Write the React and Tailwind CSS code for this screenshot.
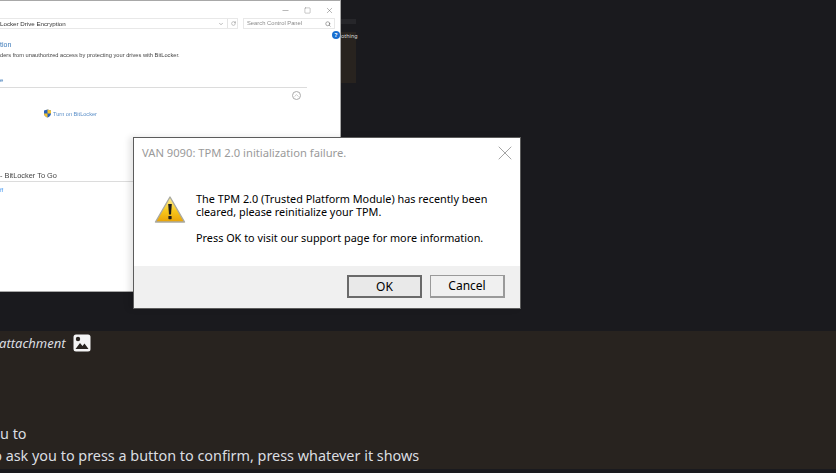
import { X, Minus, Square, ChevronDown, RotateCw, Search, ChevronUp } from "lucide-react";

const WarningIcon = () => (
    <svg width="32" height="29" viewBox="0 0 32 28">
        <defs>
            <linearGradient id="warn" x1="0" y1="0" x2="0" y2="1">
                <stop offset="0" stopColor="#fff3a0" />
                <stop offset="0.55" stopColor="#f8c81c" />
                <stop offset="1" stopColor="#e8a208" />
            </linearGradient>
        </defs>
        <path d="M16 1.5 L30.5 26.5 H1.5 Z" fill="url(#warn)" stroke="#a9a9a0" strokeWidth="1.4" strokeLinejoin="round" />
        <path d="M14.2 8.5 H17.8 L17 19 H15 Z" fill="#1c1c1c" />
        <rect x="14.4" y="20.5" width="3.2" height="3.2" rx="0.6" fill="#1c1c1c" />
    </svg>
);

const Shield = () => (
    <svg width="7" height="9" viewBox="0 0 8 9">
        <path d="M4 0 L8 1.2 V4.5 C8 7 6 8.4 4 9 C2 8.4 0 7 0 4.5 V1.2 Z" fill="#2a62b8" />
        <path d="M4 0 L8 1.2 V4.5 H4 Z" fill="#f2c230" />
        <path d="M4 4.5 V9 C2 8.4 0 7 0 4.5 Z" fill="#f2c230" />
    </svg>
);

const ImageIcon = () => (
    <svg width="18" height="18" viewBox="0 0 18 18">
        <rect x="0.5" y="0.5" width="17" height="17" rx="2.5" fill="#f4f4f4" />
        <circle cx="5" cy="5" r="2.2" fill="#28231f" />
        <path d="M2.5 15 L7 9 L9.5 12 L11.5 9.5 L15.5 15 Z" fill="#28231f" />
    </svg>
);

const ControlPanel = () => (
    <div className="absolute left-0 top-0 w-[341px] h-[292px] bg-white border-t border-r border-b border-[#a8a8a8] overflow-hidden text-[#3a3a3a] font-['Liberation_Sans',sans-serif]">
        <div className="blur-[0.3px]">
            <div className="h-4 flex items-center justify-end gap-[11px] pr-[6px] pt-[2px] text-[#444]">
                <Minus size={9} strokeWidth={1} />
                <Square size={7} strokeWidth={1} className="mx-[3px]" />
                <X size={9} strokeWidth={1} />
            </div>
            <div className="flex items-center h-[11px] mt-[1px] pr-[5px]">
                <div className="flex-1 flex items-center justify-between h-[11px] border-y border-r border-[#e8e8e8] text-[6.2px] pr-[1px]">
                    <span className="text-[#333]">Locker Drive Encryption</span>
                    <span className="flex items-center gap-[3px] text-[#777]">
                        <ChevronDown size={6} />
                        <span className="w-px h-[9px] bg-[#e4e4e4]"></span>
                        <RotateCw size={5} />
                    </span>
                </div>
                <div className="ml-[5px] w-[92px] h-[11px] border border-[#e8e8e8] flex items-center justify-between px-[3px] text-[5.8px] text-[#8a8a8a]">
                    <span>Search Control Panel</span>
                    <Search size={6} className="text-[#555]" />
                </div>
            </div>
            <p className="mt-[11px] text-[7px] leading-[10px] text-[#3a78b8]">tion</p>
            <p className="mt-[1px] text-[5.7px] leading-[8px] text-[#444] whitespace-nowrap">ders from unauthorized access by protecting your drives with BitLocker.</p>
            <p className="mt-[17px] text-[6px] leading-[8px] text-[#3a78b8]">e</p>
            <div className="mt-[3px] mr-[33px] border-t border-[#dcdcdc] flex justify-end pt-[3px] pr-[6px]">
                <span className="w-[9px] h-[9px] rounded-full border border-[#aaa] flex items-center justify-center text-[#888]">
                    <ChevronUp size={7} strokeWidth={1.5} />
                </span>
            </div>
            <div className="mt-[9px] ml-[44px] flex items-center gap-[2px] text-[5.6px] leading-[8px] text-[#5b8fc8]">
                <Shield />
                <span>Turn on BitLocker</span>
            </div>
            <p className="mt-[53px] text-[7.4px] leading-[10px] text-[#444] whitespace-nowrap">- BitLocker To Go</p>
            <div className="mr-[33px] border-t border-[#dcdcdc] text-[6px] leading-[10px] pt-[3px] text-[#4a9af0]">ff</div>
        </div>
    </div>
);

const TpmDialog = () => (
    <div className="absolute left-[133px] top-[137px] w-[388px] h-[172px] bg-white border border-[#5c5c5c] shadow-[-4px_0_6px_rgba(0,0,0,0.1)] flex flex-col font-['Noto_Sans',sans-serif]">
        <div className="flex items-start justify-between pl-[8px] pr-[3px] pt-[7px] h-[29px]">
            <span className="text-[11.2px] leading-[16px] text-[#9a9a9a]">VAN 9090: TPM 2.0 initialization failure.</span>
            <X size={24} strokeWidth={0.6} className="text-[#666] -mt-[4px]" />
        </div>
        <div className="flex-1 flex pl-[20px] pt-[25px]">
            <div className="pt-[3px] mr-[10px]">
                <WarningIcon />
            </div>
            <div className="text-[10.85px] leading-[13px] text-black">
                <p>The TPM 2.0 (Trusted Platform Module) has recently been</p>
                <p>cleared, please reinitialize your TPM.</p>
                <p className="mt-[13px]">Press OK to visit our support page for more information.</p>
            </div>
        </div>
        <div className="h-[42px] bg-[#f0f0f0] flex items-start justify-end gap-[8px] pt-[9px] pr-[15px]">
            <button className="w-[75px] h-[23px] bg-[#e9e9e9] border-2 border-[#6a6a6a] text-[12px] text-black">OK</button>
            <button className="w-[75px] h-[23px] bg-[#f0f0f0] border border-[#9a9a9a] border-r-2 border-b-2 text-[12px] text-black">Cancel</button>
        </div>
    </div>
);

const App = () => {
    return (
        <div className="w-[836px] h-[473px] bg-[#1a1a1e] flex flex-col overflow-hidden">
            <div className="relative h-[331px] shrink-0">
                <div className="absolute left-[341px] top-[19px] w-[15px] h-[5px] bg-[#26262a]"></div>
                <div className="absolute left-[341px] top-[32px] w-[15px] h-[51px] bg-[#28231f] text-[5.4px] leading-[8px] text-[#d8d8d8] font-['Noto_Sans',sans-serif]">othing</div>
                <ControlPanel />
                <div className="absolute left-[332px] top-[31px] w-2 h-2 rounded-full bg-[#1a6fd0] text-white text-[6px] leading-[8px] text-center font-bold font-['Noto_Sans',sans-serif]">?</div>
                <TpmDialog />
            </div>
            <div className="h-[138px] bg-[#28231f] text-[#dbdee1] font-['Noto_Sans',sans-serif] overflow-hidden">
                <div className="flex items-center gap-[7px] h-[24px]">
                    <span className="text-[13px] italic -ml-[1px] mt-[1px]">attachment</span>
                    <ImageIcon />
                </div>
                <p className="mt-[68px] text-[14.4px] leading-[22px]">u to</p>
                <p className="text-[14.4px] leading-[22px] -ml-[12px] whitespace-nowrap">to ask you to press a button to confirm, press whatever it shows</p>
            </div>
        </div>
    );
};

export default App;
